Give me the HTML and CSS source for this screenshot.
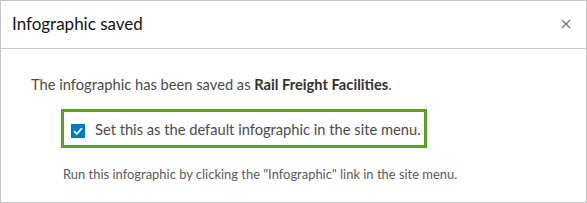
FILE: index.html
```html
<!DOCTYPE html>
<html>
<head>
<meta charset="utf-8">
<link rel="stylesheet" href="styles.css">
</head>
<body>
<div class="dialog">
  <div class="header">
    <div class="title">Infographic saved</div>
    <svg class="close" width="10" height="10" viewBox="0 0 10 10"><path d="M1 1L9 9M9 1L1 9" stroke="#6e6e6e" stroke-width="1.1" fill="none"/></svg>
  </div>
  <div class="content">
    <p class="msg">The infographic has been saved as <b>Rail Freight Facilities</b>.</p>
    <div class="highlight">
      <label class="check-row">
        <span class="checkbox"><svg width="14" height="14" viewBox="0 0 14 14"><path d="M3 7.2L5.8 10L11 4.2" stroke="#fff" stroke-width="1.8" fill="none"/></svg></span>
        <span>Set this as the default infographic in the site menu.</span>
      </label>
    </div>
    <p class="hint">Run this infographic by clicking the "Infographic" link in the site menu.</p>
  </div>
</div>
</body>
</html>
```
FILE: styles.css
```css
html, body {
  margin: 0;
  padding: 0;
  background: #fff;
}
.dialog {
  width: 587px;
  height: 203px;
  box-sizing: border-box;
  border: 1px solid #c4c4c4;
  font-family: Lato, "Noto Sans", sans-serif;
}
.header {
  height: 48px;
  border-bottom: 1px solid #cacaca;
  display: flex;
  align-items: center;
  justify-content: space-between;
  padding: 0 15px 2px 11px;
  box-sizing: border-box;
}
.title {
  font-size: 17px;
  color: #151515;
}
.close {
  display: block;
}
.content {
  padding: 25px 0 0 30px;
  font-size: 14.7px;
  color: #4a4a4a;
}
.msg {
  margin: 0;
  line-height: 20px;
}
.msg b {
  color: #323232;
}
.highlight {
  margin: 15px 0 0 30px;
  width: 366px;
  height: 39px;
  box-sizing: border-box;
  border: 3px solid #5e9f2a;
  padding: 0 0 0 7px;
  display: flex;
  align-items: center;
}
.check-row {
  display: flex;
  align-items: center;
  gap: 10px;
  line-height: 20px;
}
.checkbox {
  width: 14px;
  height: 14px;
  margin-top: 4px;
  background: #0079c1;
  display: block;
}
.checkbox svg {
  display: block;
}
.hint {
  margin: 16px 0 0 32px;
  line-height: 20px;
  font-size: 12.95px;
  color: #5a5a5a;
}
```
